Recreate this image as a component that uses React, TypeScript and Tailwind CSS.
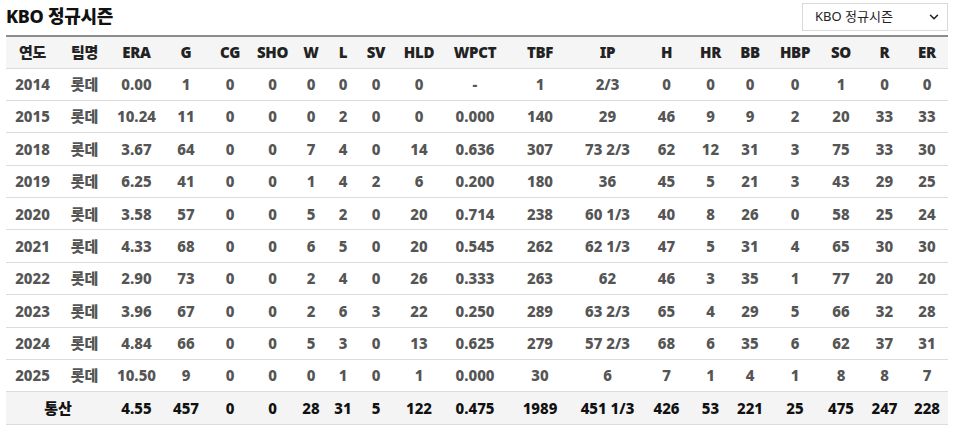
import React from 'react'
import { ChevronDown } from 'lucide-react'

type Row = (string | number)[]

const headers = ['연도', '팀명', 'ERA', 'G', 'CG', 'SHO', 'W', 'L', 'SV', 'HLD', 'WPCT', 'TBF', 'IP', 'H', 'HR', 'BB', 'HBP', 'SO', 'R', 'ER']

const widths = [
  'w-[53px]', 'w-[51px]', 'w-[53px]', 'w-[46px]', 'w-[42px]', 'w-[43px]', 'w-[34px]', 'w-[30px]', 'w-[36px]', 'w-[50px]',
  'w-[62px]', 'w-[68px]', 'w-[67px]', 'w-[51px]', 'w-[37px]', 'w-[42px]', 'w-[48px]', 'w-[44px]', 'w-[43px]', 'w-[42px]',
]

const rows: Row[] = [
  [2014, '롯데', '0.00', 1, 0, 0, 0, 0, 0, 0, '-', 1, '2/3', 0, 0, 0, 0, 1, 0, 0],
  [2015, '롯데', '10.24', 11, 0, 0, 0, 2, 0, 0, '0.000', 140, '29', 46, 9, 9, 2, 20, 33, 33],
  [2018, '롯데', '3.67', 64, 0, 0, 7, 4, 0, 14, '0.636', 307, '73 2/3', 62, 12, 31, 3, 75, 33, 30],
  [2019, '롯데', '6.25', 41, 0, 0, 1, 4, 2, 6, '0.200', 180, '36', 45, 5, 21, 3, 43, 29, 25],
  [2020, '롯데', '3.58', 57, 0, 0, 5, 2, 0, 20, '0.714', 238, '60 1/3', 40, 8, 26, 0, 58, 25, 24],
  [2021, '롯데', '4.33', 68, 0, 0, 6, 5, 0, 20, '0.545', 262, '62 1/3', 47, 5, 31, 4, 65, 30, 30],
  [2022, '롯데', '2.90', 73, 0, 0, 2, 4, 0, 26, '0.333', 263, '62', 46, 3, 35, 1, 77, 20, 20],
  [2023, '롯데', '3.96', 67, 0, 0, 2, 6, 3, 22, '0.250', 289, '63 2/3', 65, 4, 29, 5, 66, 32, 28],
  [2024, '롯데', '4.84', 66, 0, 0, 5, 3, 0, 13, '0.625', 279, '57 2/3', 68, 6, 35, 6, 62, 37, 31],
  [2025, '롯데', '10.50', 9, 0, 0, 0, 1, 0, 1, '0.000', 30, '6', 7, 1, 4, 1, 8, 8, 7],
]

const total: Row = ['4.55', 457, 0, 0, 28, 31, 5, 122, '0.475', 1989, '451 1/3', 426, 53, 221, 25, 475, 247, 228]

export default function App() {
  return (
    <div className="w-[954px] h-[432px] bg-white px-[6px] font-['Noto_Sans','Noto_Sans_CJK_KR',sans-serif]">
      {/* Title + season select */}
      <div className="flex items-center justify-between h-[35px] pb-[4px]">
        <h2 className="text-[18px] font-extrabold text-[#111] tracking-[-0.3px] pt-[2px]">KBO 정규시즌</h2>
        <div className="w-[146px] h-[28px] border border-[#d9d9d9] flex items-center justify-between pl-[12px] pr-[6px] mt-[3px] text-[13px] text-[#222]">
          <span>KBO 정규시즌</span>
          <ChevronDown className="w-[14px] h-[14px]" strokeWidth={2.6} />
        </div>
      </div>

      <table className="table-fixed w-[942px] border-collapse text-center text-[15px] font-extrabold">
        <colgroup>
          {widths.map((w, i) => (
            <col key={i} className={w} />
          ))}
        </colgroup>
        <thead>
          <tr className="h-[32px] bg-[#f5f5f5] border-t-2 border-[#8c8c8c] border-b border-b-[#dcdcdc]">
            {headers.map((h) => (
              <th key={h} className="p-0 text-[#222] font-black tracking-[-0.3px]">
                {h}
              </th>
            ))}
          </tr>
        </thead>
        <tbody>
          {rows.map((r) => (
            <tr key={r[0]} className="h-[32.4px] border-b border-[#dcdcdc]">
              {r.map((c, i) => (
                <td key={i} className="p-0 text-[#555] whitespace-nowrap">
                  {c}
                </td>
              ))}
            </tr>
          ))}
          <tr className="h-[33px] bg-[#f4f4f4] border-b border-[#dcdcdc]">
            <td colSpan={2} className="p-0 text-[#111]">통산</td>
            {total.map((c, i) => (
              <td key={i} className="p-0 text-[#111] whitespace-nowrap">
                {c}
              </td>
            ))}
          </tr>
        </tbody>
      </table>
    </div>
  )
}
